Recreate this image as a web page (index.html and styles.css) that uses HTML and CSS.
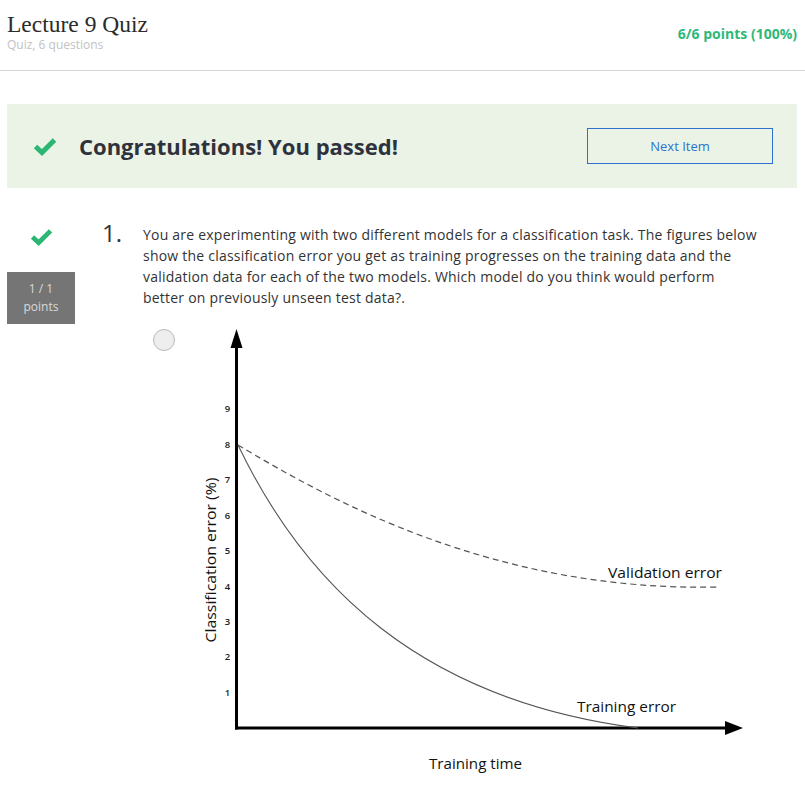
FILE: index.html
```html
<!DOCTYPE html>
<html lang="en">
<head>
<meta charset="utf-8">
<title>Lecture 9 Quiz</title>
<link rel="stylesheet" href="styles.css">
</head>
<body>
<header class="quiz-header">
  <div class="title-block">
    <h1 class="quiz-title">Lecture 9 Quiz</h1>
    <div class="quiz-sub">Quiz, 6 questions</div>
  </div>
  <div class="quiz-score">6/6 points (100%)</div>
</header>
<main class="quiz-main">
  <section class="banner">
    <svg class="check banner-check" viewBox="0 0 24 19" aria-hidden="true"><path d="M2.5 9.5 L9 15.5 L21.5 3" /></svg>
    <h2 class="banner-text">Congratulations! You passed!</h2>
    <button class="next-btn" type="button">Next Item</button>
  </section>
  <section class="question">
    <div class="q-side">
      <svg class="check q-check" viewBox="0 0 24 19" aria-hidden="true"><path d="M2.5 9.5 L9 15.5 L21.5 3" /></svg>
      <div class="q-points">1 / 1<br>points</div>
    </div>
    <div class="q-num">1.</div>
    <div class="q-body">
      <p class="q-text">You are experimenting with two different models for a classification task. The figures below<br>show the classification error you get as training progresses on the training data and the<br>validation data for each of the two models. Which model do you think would perform<br>better on previously unseen test data?.</p>
      <div class="option">
        <span class="radio"></span>
        <svg class="chart" width="570" height="465" viewBox="190 325 570 465" aria-label="Classification error chart">
          <g class="axis">
            <line x1="236.5" y1="345" x2="236.5" y2="729.5" />
            <polygon points="236.5,329 230.5,348 242.5,348" />
            <line x1="235" y1="728" x2="727" y2="728" />
            <polygon points="743,728 725,721 725,735" />
          </g>
          <g class="ticks">
            <text x="227.5" y="412">9</text>
            <text x="227.5" y="447.5">8</text>
            <text x="227.5" y="483">7</text>
            <text x="227.5" y="518.5">6</text>
            <text x="227.5" y="554">5</text>
            <text x="227.5" y="589.5">4</text>
            <text x="227.5" y="625">3</text>
            <text x="227.5" y="660">2</text>
            <text x="227.5" y="695.5">1</text>
          </g>
          <path class="curve-val" d="M238 445 C330 500 495 592 718 587" />
          <path class="curve-train" d="M238 445 C305 585 420 700 638 728" />
          <g class="labels">
            <text class="y-label" transform="translate(216 560) rotate(-90)" text-anchor="middle" textLength="165" lengthAdjust="spacingAndGlyphs">Classification error (%)</text>
            <text x="608" y="578" textLength="114" lengthAdjust="spacingAndGlyphs">Validation error</text>
            <text x="577" y="712" textLength="99" lengthAdjust="spacingAndGlyphs">Training error</text>
            <text x="429" y="769" textLength="93" lengthAdjust="spacingAndGlyphs">Training time</text>
          </g>
        </svg>
      </div>
    </div>
  </section>
</main>
</body>
</html>
```
FILE: styles.css
```css
* { box-sizing: border-box; }

html, body {
  margin: 0;
  padding: 0;
  background: #ffffff;
}

body {
  font-family: "Open Sans", "Noto Sans", "Liberation Sans", sans-serif;
  color: #333333;
  overflow: hidden;
}

.quiz-header {
  display: flex;
  justify-content: space-between;
  align-items: flex-start;
  height: 71px;
  padding: 0 8px 0 7px;
  border-bottom: 1px solid #d5d5d5;
}

.quiz-title {
  margin: 0;
  padding-top: 10px;
  font-family: "Liberation Serif", "DejaVu Serif", serif;
  font-weight: 400;
  font-size: 23.5px;
  line-height: 28px;
  color: #2b2b2b;
}

.quiz-sub {
  font-size: 12px;
  line-height: 14px;
  color: #c2c2c2;
}

.quiz-score {
  margin-top: 24px;
  font-size: 14px;
  line-height: 20px;
  font-weight: 700;
  color: #2fb879;
}

.quiz-main {
  padding: 33px 8px 0 7px;
}

.banner {
  display: flex;
  align-items: center;
  height: 84px;
  padding: 0 24px 0 26px;
  background: #ebf3e6;
}

.check {
  display: block;
  fill: none;
  stroke: #2bb673;
  stroke-width: 5;
  stroke-linejoin: miter;
  stroke-linecap: butt;
}

.banner-check {
  width: 24px;
  height: 19px;
}

.banner-text {
  margin: 0 0 0 22px;
  font-size: 22px;
  line-height: 30px;
  font-weight: 700;
  color: #2e323d;
}

.next-btn {
  margin-left: auto;
  width: 186px;
  height: 36px;
  border: 1px solid #2a73cc;
  background: transparent;
  color: #2a73cc;
  font-family: "Open Sans", "Noto Sans", sans-serif;
  font-size: 13px;
  padding: 0;
}

.question {
  display: grid;
  grid-template-columns: 68px 68px 1fr;
  margin-top: 36px;
}

.q-side {
  display: flex;
  flex-direction: column;
  align-items: center;
}

.q-check {
  width: 23px;
  height: 18px;
  margin-top: 4px;
}

.q-points {
  margin-top: 26px;
  width: 68px;
  height: 52px;
  padding: 8px 0;
  background: #757575;
  color: #d9d9d9;
  font-size: 12px;
  line-height: 18px;
  text-align: center;
}

.q-num {
  padding-left: 27px;
  margin-top: -2px;
  font-size: 24px;
  line-height: 21px;
  font-weight: 400;
  color: #333333;
}

.q-text {
  margin: 0;
  font-size: 14px;
  letter-spacing: 0.22px;
  line-height: 21px;
  white-space: nowrap;
  color: #333333;
}

.option {
  display: flex;
  align-items: flex-start;
  margin-top: 17px;
}

.radio {
  flex: none;
  width: 22px;
  height: 22px;
  margin: 4px 0 0 10px;
  border: 1px solid #b8b8b8;
  border-radius: 50%;
  background: #eeeeee;
}

.chart {
  display: block;
  flex: none;
  margin-left: 15px;
  font-family: "Open Sans", "Noto Sans", sans-serif;
}

.axis line {
  stroke: #000000;
  stroke-width: 3;
}

.axis polygon {
  fill: #000000;
}

.ticks text {
  font-size: 9.5px;
  font-weight: 600;
  fill: #222222;
  text-anchor: middle;
}

.curve-val {
  fill: none;
  stroke: #555555;
  stroke-width: 1.2;
  stroke-dasharray: 6 4;
}

.curve-train {
  fill: none;
  stroke: #555555;
  stroke-width: 1.1;
}

.labels text {
  font-size: 15px;
  fill: #111111;
}
```
